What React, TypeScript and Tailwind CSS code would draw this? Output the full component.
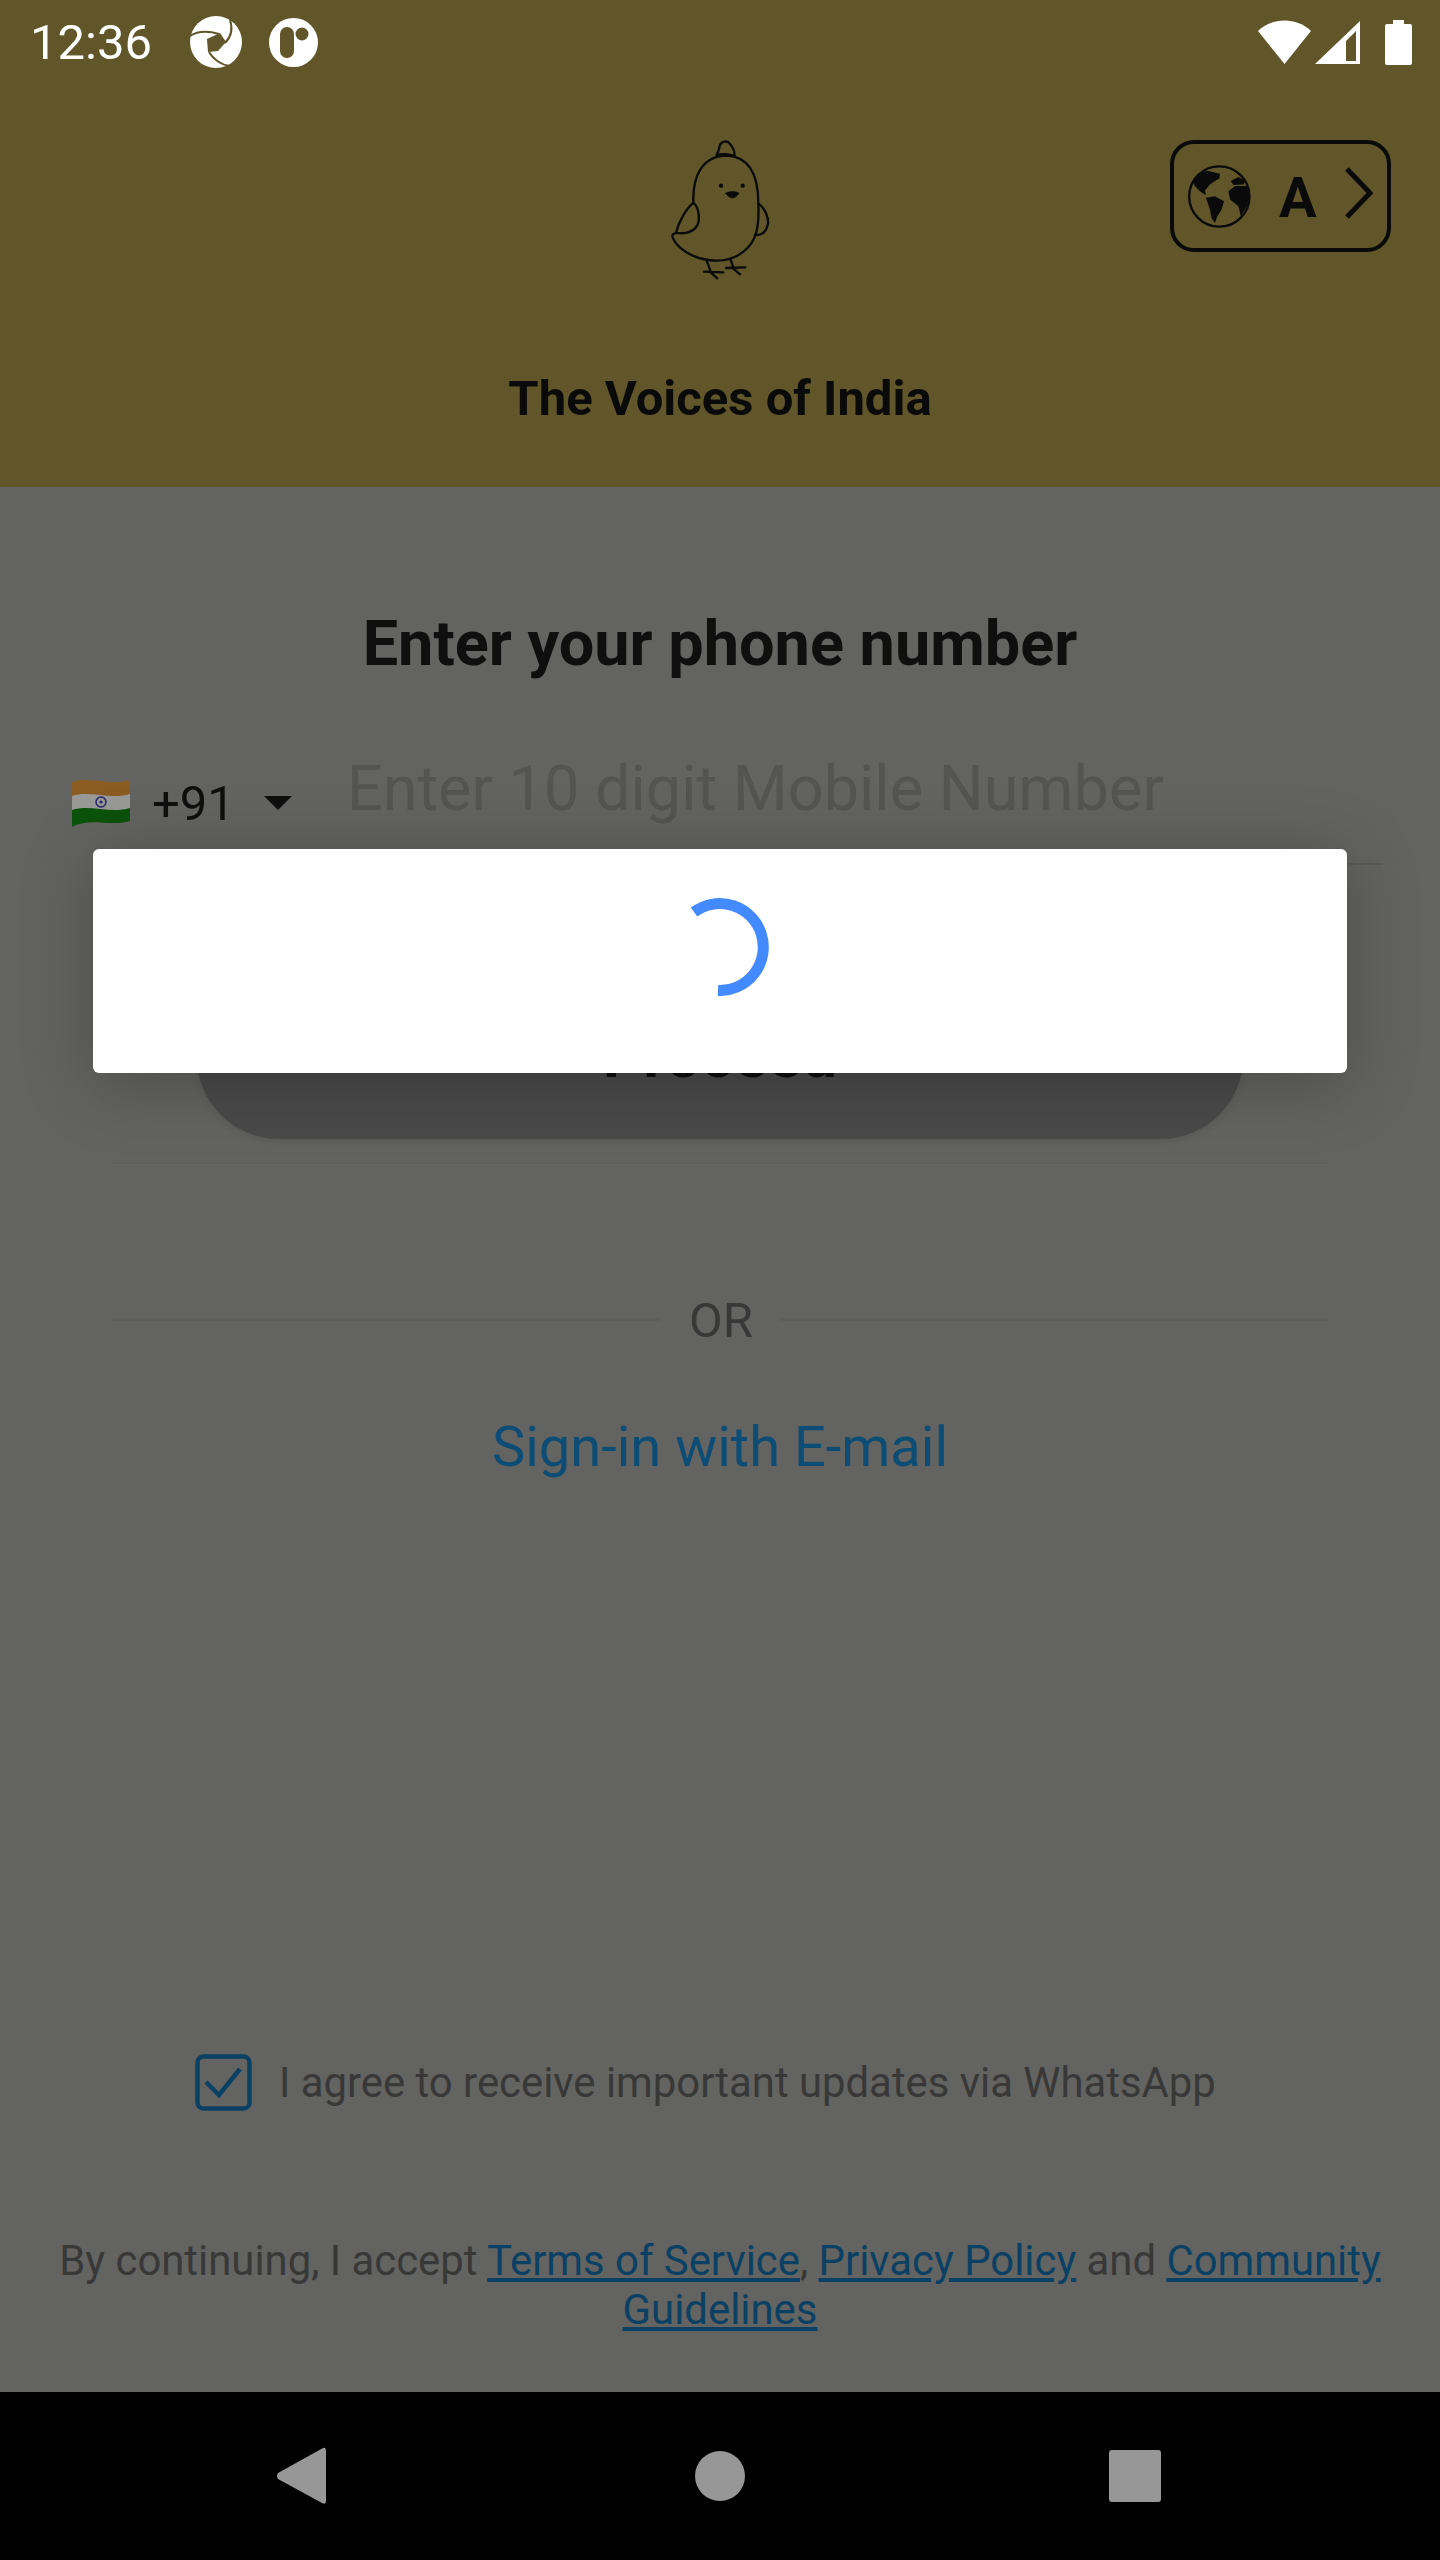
import React from 'react';

const roboto = "font-['Roboto',sans-serif]";

const StatusBar = () => (
  <div className="flex items-center h-[84px] pl-[30px] pr-[28px]">
    <span className="text-[49px] leading-none font-normal text-white w-[159px]">12:36</span>
    {/* app notification icons */}
    <svg width="54" height="54" viewBox="0 0 54 54" className="mr-[26px]">
      <circle cx="27" cy="27" r="26" fill="#fff" />
      <path d="M18 24 L31 18 L37 27 L29 36 L19 37 Z" fill="#615629" />
      <path d="M1 21 C10 15 20 16 30 19" stroke="#615629" strokeWidth="2" fill="none" />
      <path d="M41 5 C44 14 42 22 36 28" stroke="#615629" strokeWidth="2" fill="none" />
      <path d="M20 37 C24 44 32 50 41 51" stroke="#615629" strokeWidth="2" fill="none" />
    </svg>
    <svg width="49" height="49" viewBox="0 0 49 49">
      <circle cx="24.5" cy="24.5" r="24.5" fill="#fff" />
      <rect x="11" y="9" width="14" height="31" rx="7" fill="#615629" />
      <circle cx="33" cy="16" r="6.5" fill="#615629" />
    </svg>
    <div className="ml-auto flex items-center">
      <svg width="53" height="44" viewBox="0 0 53 44">
        <path d="M0 11 C14 -3 39 -3 53 11 L26.5 44 Z" fill="#fff" />
      </svg>
      <svg width="45" height="44" viewBox="0 0 45 44" className="ml-[4px] mr-[25px]">
        <path fillRule="evenodd" d="M0 44 L45 1 L45 44 Z M31 41 L41 41 L41 11 L31 21 Z" fill="#fff" />
      </svg>
      <svg width="27" height="45" viewBox="0 0 27 45">
        <path d="M8 0 H19 V4 H25 Q27 4 27 6 V43 Q27 45 25 45 H2 Q0 45 0 43 V6 Q0 4 2 4 H8 Z" fill="#fff" />
      </svg>
    </div>
  </div>
);

const Chick = () => (
  <svg width="160" height="170" viewBox="0 0 480 510" fill="none" stroke="#0a0a0a" strokeWidth="7" strokeLinecap="round" strokeLinejoin="round">
    <path d="M230 105 C235 95 238 85 240 75 C245 62 262 62 268 70 C278 78 284 95 284 108" />
    <path d="M230 105 C245 100 270 103 284 108" />
    <path d="M160 245 C158 170 185 108 260 107 C330 110 355 170 355 250 C358 320 350 365 310 395 C280 420 240 425 205 420 C160 415 110 385 98 352 C95 343 100 340 108 340" />
    <path d="M160 248 C180 265 182 310 165 325 C150 340 125 342 108 338 C115 310 135 270 160 248 Z" />
    <path d="M355 250 C375 265 388 295 383 315 C378 335 365 345 350 345" />
    <path d="M200 422 L212 455 M192 455 L250 457 M212 457 L232 475" />
    <path d="M272 420 L280 442 M258 444 L316 442 M278 444 L300 463" />
    <circle cx="243" cy="197" r="3" fill="#0a0a0a" />
    <circle cx="308" cy="197" r="3" fill="#0a0a0a" />
    <path d="M257 220 C265 213 288 213 297 220 C290 230 282 234 277 234 C270 233 262 228 257 220 Z" fill="#0a0a0a" strokeWidth="2" />
  </svg>
);

const Globe = () => (
  <svg width="63" height="63" viewBox="115 102 187 188" fill="#0a0a0a">
    <circle cx="208" cy="196" r="90" fill="none" stroke="#0a0a0a" strokeWidth="7" />
    <path d="M128 150 C140 128 165 115 185 122 L210 128 L208 142 L195 150 L180 160 L165 178 L168 192 L150 180 L135 165 Z" />
    <path d="M168 200 L195 195 L222 210 L215 235 L202 255 L195 275 L185 262 L180 235 Z" />
    <path d="M235 180 L255 165 L290 165 L298 195 L290 225 L272 255 L265 225 L240 205 Z" />
    <path d="M242 150 L265 138 L285 150 L280 160 L250 162 Z" />
  </svg>
);

const LanguageButton = () => (
  <div className="absolute left-[1170px] top-[140px] flex items-center w-[221px] h-[112px] rounded-[24px] border-[4px] border-[#0a0a0a] pl-[14px]">
    <Globe />
    <span className="ml-[28px] mt-[4px] text-[56px] leading-none font-bold text-[#0a0a0a]">A</span>
    <svg width="28" height="52" viewBox="0 0 28 52" className="ml-[28px] -mt-[6px]" fill="none" stroke="#0a0a0a" strokeWidth="5">
      <path d="M2 2 L25 26 L2 50" />
    </svg>
  </div>
);

const Header = () => (
  <header className="relative h-[487px] bg-[#615629]">
    <StatusBar />
    <div className="flex justify-center pt-[36px]">
      <Chick />
    </div>
    <LanguageButton />
    <h1 className="mt-[80px] text-center text-[49px] leading-[58px] font-bold text-[#0a0a0a]">The Voices of India</h1>
  </header>
);

const IndiaFlag = () => (
  <svg width="58" height="49" viewBox="0 0 58 49" className="-mt-[3px]">
    <path d="M0 4 C18 -2 38 8 58 2 V18 C38 24 18 14 0 20 Z" fill="#8a5c22" />
    <path d="M0 18 C18 12 38 22 58 16 V32 C38 38 18 28 0 34 Z" fill="#999997" />
    <path d="M0 32 C18 26 38 36 58 30 V43 C38 49 18 39 0 49 Z" fill="#0b520b" />
    <circle cx="29" cy="24" r="5" fill="none" stroke="#25256b" strokeWidth="1.5" />
    <circle cx="29" cy="24" r="1.5" fill="#25256b" />
  </svg>
);

const PhoneForm = () => (
  <div className="pt-[120px]">
    <h2 className="text-center text-[63px] leading-[74px] font-bold text-[#0f0f0f]">Enter your phone number</h2>
    <div className="flex items-start pl-[72px] pr-[57px] mt-[71px]">
      <div className="flex items-center pt-[24px]">
        <IndiaFlag />
        <span className="ml-[22px] text-[49px] leading-[56px] text-[#0f0f0f]">+91</span>
        <div className="ml-[29px] mt-[-2px] w-0 h-0 border-x-[14px] border-x-transparent border-t-[14px] border-t-[#0f0f0f]" />
      </div>
      <div className="flex-1 ml-[55px] border-b-[2px] border-[#595957] h-[113px]">
        <span className="text-[63px] leading-[74px] text-[#545452]">Enter 10 digit Mobile Number</span>
      </div>
    </div>
    {/* Proceed button, mostly hidden by the dialog */}
    <div className="mt-[110px] mx-[197px] h-[164px] rounded-full bg-[#4a4a4a] flex items-center justify-center shadow-[0_2px_6px_rgba(0,0,0,0.1)]">
      <span className="-mt-[2px] text-[63px] leading-[74px] font-bold text-[#0f0f0f]">Proceed</span>
    </div>
    <div className="mt-[23px] mx-[112px] h-[2px] bg-[#5f5f5d]" />
  </div>
);

const OrDivider = () => (
  <div className="flex items-center px-[112px] mt-[125px]">
    <div className="flex-1 h-[3px] bg-[#5e5e5c]" />
    <span className="ml-[30px] mr-[28px] mt-[3px] text-[49px] leading-[58px] text-[#383838]">OR</span>
    <div className="flex-1 h-[3px] bg-[#5e5e5c]" />
  </div>
);

const Footer = () => (
  <div className="mt-auto">
    <div className="flex items-center pl-[195px]">
      <svg width="57" height="57" viewBox="0 0 57 57" fill="none" stroke="#0a4063" strokeWidth="4.5">
        <rect x="2.5" y="2.5" width="52" height="52" rx="6" />
        <path d="M11 28 L24 41 L45 15" />
      </svg>
      <span className="ml-[27px] text-[41.85px] leading-[50px] text-[#383838]">I agree to receive important updates via WhatsApp</span>
    </div>
    <p className="mt-[125px] px-[56px] pb-[58px] text-center text-[41.85px] leading-[49px] text-[#383838]">
      By continuing, I accept <a className="text-[#0a4063] underline">Terms of Service</a>, <a className="text-[#0a4063] underline">Privacy Policy</a> and <a className="text-[#0a4063] underline">Community</a> <a className="text-[#0a4063] underline">Guidelines</a>
    </p>
  </div>
);

const LoadingDialog = () => (
  <div className="absolute left-[93px] top-[849px] w-[1254px] h-[224px] rounded-[6px] bg-white pt-[49px] flex justify-center shadow-[0_10px_70px_rgba(0,0,0,0.25)]">
    <svg width="98" height="98" viewBox="0 0 98 98" fill="none" stroke="#448aff" strokeWidth="11">
      <path d="M23 14 A43.5 43.5 0 1 1 47 92.5" />
    </svg>
  </div>
);

const NavBar = () => (
  <div className="h-[168px] bg-black flex items-center">
    <svg width="50" height="58" viewBox="0 0 50 58" className="ml-[276px]">
      <path d="M47 1 Q50 0 50 4 V54 Q50 58 46 56 L2 32 Q0 29 2 26 Z" fill="#979797" />
    </svg>
    <div className="ml-[369px] w-[50px] h-[50px] rounded-full bg-[#979797]" />
    <div className="ml-[364px] w-[52px] h-[52px] rounded-[3px] bg-[#979797]" />
  </div>
);

const App = () => (
  <div className={`relative w-[1440px] h-[2560px] flex flex-col overflow-hidden bg-[#636361] ${roboto}`}>
    <Header />
    <main className="flex-1 flex flex-col">
      <PhoneForm />
      <OrDivider />
      <div className="mt-[64px] text-center text-[56px] leading-[66px] text-[#0c4c75]">Sign-in with E-mail</div>
      <Footer />
    </main>
    <NavBar />
    <LoadingDialog />
  </div>
);

export default App;
